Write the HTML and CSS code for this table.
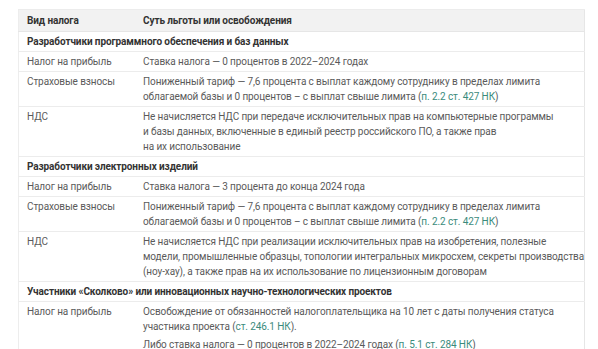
FILE: index.html
```html
<!DOCTYPE html>
<html lang="ru">
<head>
<meta charset="utf-8">
<link rel="stylesheet" href="styles.css">
</head>
<body>
<div class="wrap">
<table class="tax">
  <thead>
    <tr><th class="c1">Вид налога</th><th>Суть льготы или освобождения</th></tr>
  </thead>
  <tbody>
    <tr class="sec"><td colspan="2">Разработчики программного обеспечения и баз данных</td></tr>
    <tr><td class="c1">Налог на прибыль</td><td>Ставка налога — 0 процентов в 2022–2024 годах</td></tr>
    <tr><td class="c1">Страховые взносы</td><td>Пониженный тариф — 7,6 процента с выплат каждому сотруднику в пределах лимита<br>облагаемой базы и 0 процентов – с выплат свыше лимита (<a href="#">п. 2.2 ст. 427 НК</a>)</td></tr>
    <tr><td class="c1">НДС</td><td>Не начисляется НДС при передаче исключительных прав на компьютерные программы<br>и базы данных, включенные в единый реестр российского ПО, а также прав<br>на их использование</td></tr>
    <tr class="sec"><td colspan="2">Разработчики электронных изделий</td></tr>
    <tr><td class="c1">Налог на прибыль</td><td>Ставка налога — 3 процента до конца 2024 года</td></tr>
    <tr><td class="c1">Страховые взносы</td><td>Пониженный тариф — 7,6 процента с выплат каждому сотруднику в пределах лимита<br>облагаемой базы и 0 процентов – с выплат свыше лимита (<a href="#">п. 2.2 ст. 427 НК</a>)</td></tr>
    <tr><td class="c1">НДС</td><td>Не начисляется НДС при реализации исключительных прав на изобретения, полезные<br>модели, промышленные образцы, топологии интегральных микросхем, секреты производства<br>(ноу-хау), а также прав на их использование по лицензионным договорам</td></tr>
    <tr class="sec"><td colspan="2">Участники «Сколково» или инновационных научно-технологических проектов</td></tr>
    <tr><td class="c1">Налог на прибыль</td><td><p>Освобождение от обязанностей налогоплательщика на 10 лет с даты получения статуса<br>участника проекта (<a href="#">ст. 246.1 НК</a>).</p><p>Либо ставка налога — 0 процентов в 2022–2024 годах (<a href="#">п. 5.1 ст. 284 НК</a>)</p></td></tr>
  </tbody>
</table>
</div>
</body>
</html>
```

FILE: styles.css
```css
html, body {
  margin: 0;
  padding: 0;
  background: #ffffff;
}
.wrap {
  padding: 9px 13px 0 18px;
}
.tax {
  width: 567px;
  table-layout: fixed;
  border-collapse: collapse;
  font-family: Roboto, "Open Sans", sans-serif;
  font-size: 10px;
  letter-spacing: -0.1px;
  line-height: 15px;
  color: #5a5a5a;
  border-left: 1px solid #ededed;
  border-right: 1px solid #e6e6e6;
}
.tax th {
  background: #f2f2f2;
  color: #333333;
  font-weight: 700;
  text-align: left;
  padding: 3px 8px;
  border-top: 1px solid #ececec;
  border-bottom: 1px solid #e6e6e6;
}
.tax td {
  padding: 2px 8px;
  vertical-align: top;
  border-bottom: 1px solid #ececec;
  white-space: nowrap;
}
.tax .c1 {
  width: 100px;
}
.tax .sec td {
  color: #333333;
  font-weight: 700;
}
.tax a {
  color: #3b8b7c;
  text-decoration: none;
}
.tax p {
  margin: 0 0 3px;
}
```
